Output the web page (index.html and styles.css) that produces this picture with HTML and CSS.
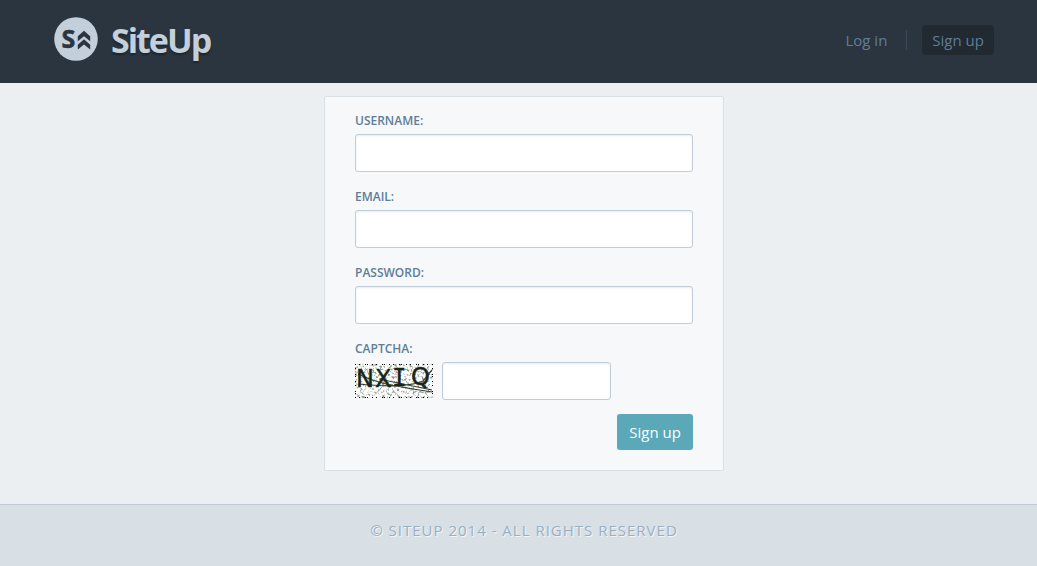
FILE: index.html
```html
<!DOCTYPE html>
<html lang="en">
<head>
<meta charset="utf-8">
<meta name="viewport" content="width=device-width, initial-scale=1">
<title>SiteUp - Sign up</title>
<link rel="stylesheet" href="styles.css">
</head>
<body>
<header class="header">
  <a class="brand" href="#">
    <svg class="brand-mark" viewBox="0 0 44 44" aria-hidden="true">
      <circle cx="22" cy="22" r="21.8" fill="#c3cfda"/>
      <text class="brand-letter" x="7.6" y="31">S</text>
      <path fill="#2b353f" d="M23.8 19.3 30 13.8l6.2 5.5v4.9L30 19.2l-6.2 5zM23.8 27.7l6.2-5.5 6.2 5.5v4.9L30 27.6l-6.2 5z"/>
    </svg>
    <span class="brand-name">SiteUp</span>
  </a>
  <nav class="nav">
    <a class="nav-link" href="#">Log in</a>
    <a class="nav-link nav-link-active" href="#">Sign up</a>
  </nav>
</header>
<main class="main">
  <form class="card">
    <div class="field">
      <label class="label" for="username">Username:</label>
      <input class="input" id="username" type="text">
    </div>
    <div class="field">
      <label class="label" for="email">Email:</label>
      <input class="input" id="email" type="email">
    </div>
    <div class="field">
      <label class="label" for="password">Password:</label>
      <input class="input" id="password" type="password">
    </div>
    <div class="field field-last">
      <label class="label" for="captcha">Captcha:</label>
      <div class="captcha-row">
        <svg class="captcha" viewBox="0 0 78 34" role="img" aria-label="captcha">
          <defs>
            <filter id="grain" x="0" y="0" width="100%" height="100%">
              <feTurbulence type="fractalNoise" baseFrequency="0.4" numOctaves="2" seed="7"/>
              <feColorMatrix values="0 0 0 0 .2  0 0 0 0 .25  0 0 0 0 .2  5 0 0 0 -2.5"/>
            </filter>
          </defs>
          <rect width="78" height="34" fill="#fff"/>
          <rect width="78" height="34" filter="url(#grain)" opacity=".8"/>
          <path d="M0 .5h78M0 33.5h78M.5 0v34M77.5 0v34" stroke="#000" stroke-dasharray="1 3 1 5 1 1 1 4"/>
          <g class="captcha-letters">
            <text x="1" y="23">N</text>
            <text x="20" y="23">X</text>
            <text class="captcha-wide" x="37" y="22">I</text>
            <text x="56" y="21">Q</text>
          </g>
          <path d="M3 10C25 21 47 23 77 28M3 20c20 2 49 4 65-3l9-11M24 15l53 11" fill="none" stroke="#17251b" stroke-opacity=".85" stroke-width="1.2"/>
        </svg>
        <input class="input input-short" id="captcha" type="text">
      </div>
    </div>
    <div class="actions"><button class="button" type="submit">Sign up</button></div>
  </form>
</main>
<footer class="footer">© SiteUp 2014 - All rights reserved</footer>
</body>
</html>
```
FILE: styles.css
```css
* {
  box-sizing: border-box;
}

body {
  display: flex;
  flex-direction: column;
  min-height: 100vh;
  margin: 0;
  background: #ebeff2;
  color: #5f7d99;
  font-family: "Open Sans", sans-serif;
  font-size: 15px;
  line-height: 20px;
}

a {
  color: inherit;
  text-decoration: none;
}

.header {
  display: flex;
  align-items: center;
  justify-content: space-between;
  padding: 17px 43px 22px 54px;
  background: #2b353f;
}

.brand {
  display: flex;
  align-items: center;
  gap: 13px;
  color: #c3cfda;
}

.brand-mark {
  width: 44px;
  height: 44px;
}

.brand-letter {
  fill: #2b353f;
  font-size: 25px;
  font-weight: 700;
  stroke: #2b353f;
  stroke-width: 0.5;
}

.brand-name {
  padding-top: 2px;
  font-size: 34px;
  font-weight: 700;
  line-height: 40px;
  letter-spacing: -2px;
  text-shadow: 0 2px 2px #1d252d;
}

.nav {
  display: flex;
  align-items: center;
  padding-top: 2px;
}

.nav-link {
  margin-right: 15px;
  padding-right: 19px;
  border-right: 1px solid #3b4855;
}

.nav-link-active {
  margin: 0;
  padding: 5px 10px;
  border: 0;
  border-radius: 4px;
  background: #212931;
}

.main {
  flex: 1;
  padding: 13px 0 33px 11px;
}

.card {
  max-width: 400px;
  margin: 0 auto;
  padding: 16px 30px 20px;
  border: 1px solid #d8dfe5;
  border-radius: 2px;
  background: #f6f8fa;
}

.field {
  margin-bottom: 17px;
}

.field-last {
  margin-bottom: 14px;
}

.label {
  display: block;
  margin-bottom: 5px;
  font-size: 12px;
  font-weight: 600;
  line-height: 16px;
  text-transform: uppercase;
}

.input {
  display: block;
  width: 100%;
  height: 38px;
  padding: 8px 10px;
  border: 1px solid #c0ccd7;
  border-radius: 3px;
  background: #fff;
  box-shadow: inset 0 1px 2px #e8edf1;
  color: inherit;
  font: inherit;
}

.input-short {
  width: 50%;
}

.captcha-row {
  display: flex;
  align-items: center;
  gap: 9px;
}

.captcha {
  flex: none;
  width: 78px;
  height: 34px;
}

.captcha-letters {
  fill: #17251b;
  stroke: #17251b;
  stroke-width: 0.4;
  font-family: "DejaVu Sans", sans-serif;
  font-size: 24px;
}

.captcha-wide {
  font-family: "DejaVu Sans Mono", monospace;
}

.actions {
  display: flex;
  justify-content: flex-end;
}

.button {
  padding: 8px 12px;
  border: 0;
  border-radius: 3px;
  background: #5aa8b8;
  color: #fff;
  font: inherit;
}

.footer {
  padding: 15px 0 26px 11px;
  border-top: 1px solid #c0ccd7;
  background: #d8dfe5;
  color: #9aafc3;
  letter-spacing: 1px;
  text-align: center;
  text-shadow: 1px 1px 0 #f3f6f8;
  text-transform: uppercase;
}
```
